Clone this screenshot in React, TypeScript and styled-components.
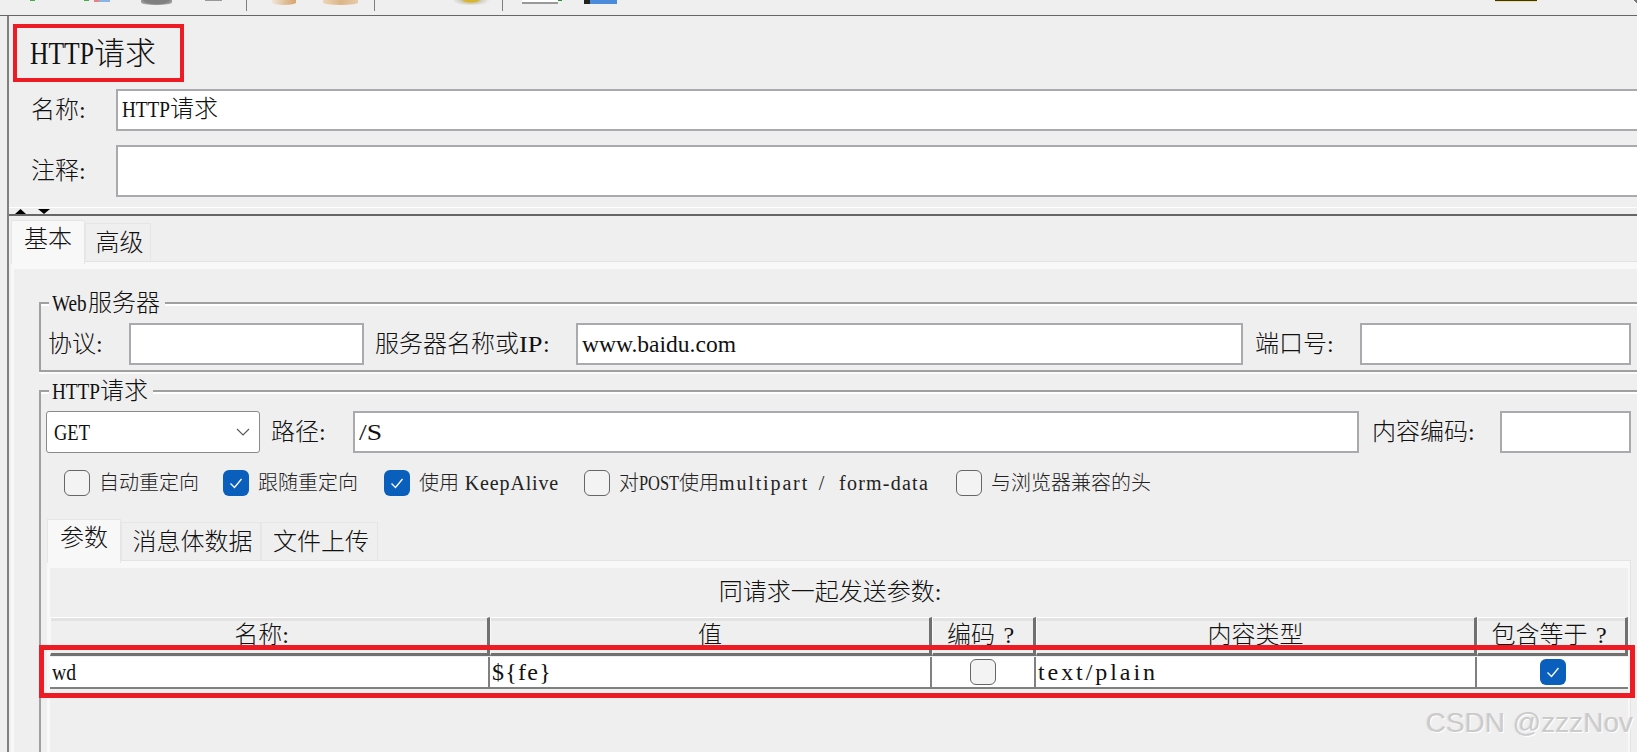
import React from 'react';
import styled, { createGlobalStyle } from 'styled-components';

const GlobalStyle = createGlobalStyle`
  html, body {
    margin: 0;
    padding: 0;
    background: #efefef;
  }
  * {
    box-sizing: border-box;
  }
`;

const Page = styled.div`
  position: relative;
  width: 1637px;
  height: 752px;
  overflow: hidden;
  display: flex;
  flex-direction: column;
  background: #efefef;
  color: #111;
  font-family: 'Liberation Serif', 'Noto Sans CJK SC', serif;
  font-size: 24px;
  font-weight: 300;
`;

/* SimSun style half-width latin: squeezed or tracked into fixed cells */
const Latin = styled.span<{ $cells: number; $scale?: number; $track?: number }>`
  display: inline-block;
  width: ${(p) => p.$cells * 0.5}em;
  white-space: pre;
  font-weight: 400;
  letter-spacing: ${(p) => p.$track ?? 0}em;
  transform: scaleX(${(p) => p.$scale ?? 1});
  transform-origin: left center;
`;

const Toolbar = styled.div`
  flex: none;
  height: 16px;
  display: flex;
  align-items: flex-start;
  border-bottom: 1px solid #666;
`;

const Stub = styled.div<{ $left: number; $w: number; $h: number; $bg: string; $round?: boolean }>`
  flex: none;
  margin-left: ${(p) => p.$left}px;
  width: ${(p) => p.$w}px;
  height: ${(p) => p.$h}px;
  background: ${(p) => p.$bg};
  border-radius: ${(p) => (p.$round ? '0 0 50% 50%' : '0')};
`;

const ToolSeparator = styled.div<{ $left: number }>`
  flex: none;
  margin-left: ${(p) => p.$left}px;
  width: 1px;
  height: 11px;
  background: #808080;
`;

const Content = styled.div`
  flex: 1;
  min-height: 0;
  margin-left: 7px;
  border-left: 2px solid #808080;
  display: flex;
  flex-direction: column;
`;

const TitleBox = styled.div`
  flex: none;
  width: 171px;
  height: 58px;
  margin: 8px 0 0 4px;
  padding-left: 13px;
  border: 4px solid #ed1c24;
  display: flex;
  align-items: center;
  font-size: 31px;
  line-height: 1;
`;

const FormRow = styled.div<{ $top: number; $h: number }>`
  flex: none;
  display: flex;
  margin-top: ${(p) => p.$top}px;
  height: ${(p) => p.$h}px;
  padding-left: 22px;
`;

const RowLabel = styled.label`
  flex: none;
  width: 85px;
  align-self: center;
  line-height: 1;
`;

const WideField = styled.div`
  flex: 1;
  margin-right: -6px;
  padding: 0 0 2px 4px;
  display: flex;
  align-items: center;
  background: #fff;
  border: 2px solid #a9a9ae;
  line-height: 1;
`;

const Splitter = styled.div`
  flex: none;
  height: 9px;
  margin-top: 10px;
  padding-left: 6px;
  display: flex;
  align-items: flex-end;
  gap: 12px;
  border-top: 1px solid #fff;
  border-bottom: 2px solid #666;
`;

const TabBar = styled.div<{ $top: number; $left: number }>`
  flex: none;
  display: flex;
  align-items: flex-end;
  margin-top: ${(p) => p.$top}px;
  margin-left: ${(p) => p.$left}px;
`;

const Tab = styled.div<{ $active?: boolean; $w: number }>`
  position: relative;
  width: ${(p) => p.$w}px;
  height: ${(p) => (p.$active ? 44 : 38)}px;
  margin-bottom: ${(p) => (p.$active ? -3 : 0)}px;
  padding-bottom: ${(p) => (p.$active ? 8 : 0)}px;
  padding-left: ${(p) => (p.$active ? 0 : 3)}px;
  display: flex;
  align-items: center;
  justify-content: center;
  line-height: 1;
  background: ${(p) => (p.$active ? '#f8f8f8' : '#efefef')};
  border: 1px solid #e6e6e6;
  border-bottom: 0;
  z-index: ${(p) => (p.$active ? 1 : 0)};
`;

const OuterPanel = styled.div`
  flex: 1;
  min-height: 0;
  margin-left: 2px;
  padding: 7px 0 0 3px;
  display: flex;
  background: #f8f8f8;
  border-top: 1px solid #e3e3e3;
`;

const OuterBody = styled.div`
  flex: 1;
  min-width: 0;
  padding: 19px 0 0 25px;
  background: #efefef;
`;

const Group = styled.fieldset<{ $top?: number; $tall?: boolean }>`
  display: block;
  margin: ${(p) => p.$top ?? 0}px -10px 0 0;
  padding: 5px 14px 5px 5px;
  min-width: 0;
  min-height: ${(p) => (p.$tall ? 500 : 0)}px;
  border: 2px solid #a0a0a0;
  box-shadow: inset 0 2px 0 #fff, 0 2px 0 #fbfbfb;
`;

const Legend = styled.legend`
  height: 30px;
  margin-left: 3px;
  padding: 0 5px 0 3px;
  background: #efefef;
  line-height: 30px;
`;

const FieldRow = styled.div`
  display: flex;
  align-items: stretch;
  height: 42px;
`;

const FieldLabel = styled.label<{ $w: number; $left: number }>`
  flex: none;
  width: ${(p) => p.$w}px;
  margin-left: ${(p) => p.$left}px;
  align-self: center;
  line-height: 1;
`;

const Field = styled.div<{ $w?: number }>`
  flex: ${(p) => (p.$w ? `none` : `1`)};
  width: ${(p) => (p.$w ? `${p.$w}px` : 'auto')};
  min-width: 0;
  padding-left: 4px;
  display: flex;
  align-items: center;
  background: #fff;
  border: 2px solid #a9a9ae;
  line-height: 1;
`;

const Select = styled.div`
  flex: none;
  width: 214px;
  padding: 0 9px 0 7px;
  display: flex;
  align-items: center;
  justify-content: space-between;
  background: #fff;
  border: 1px solid #8a8a8a;
  border-radius: 3px;
  line-height: 1;
`;

const OptionRow = styled.div`
  display: flex;
  align-items: center;
  height: 26px;
  margin-top: 17px;
  padding-left: 18px;
  font-size: 20px;
  line-height: 1;
  color: #222;
`;

const OptionItem = styled.div<{ $gap: number }>`
  display: flex;
  align-items: center;
  gap: 9px;
  margin-right: ${(p) => p.$gap}px;
`;

const CheckBox = styled.span<{ $checked?: boolean }>`
  flex: none;
  width: 26px;
  height: 26px;
  display: flex;
  align-items: center;
  justify-content: center;
  border-radius: 6px;
  border: ${(p) => (p.$checked ? '0' : '1.5px solid #666')};
  background: ${(p) => (p.$checked ? '#0a5fbc' : '#f3f3f3')};
`;

const InnerPanel = styled.div`
  margin-left: 1px;
  padding: 7px 2px 0 3px;
  background: #f8f8f8;
  border-top: 1px solid #e3e3e3;
  border-right: 1px solid #e3e3e3;
`;

const InnerBody = styled.div`
  background: #efefef;
  min-height: 300px;
`;

const Caption = styled.div`
  height: 49px;
  padding: 5px 18px 0 0;
  line-height: 38px;
  text-align: center;
`;

const TableArea = styled.div`
  position: relative;
`;

const Columns = styled.div`
  display: grid;
  grid-template-columns: 440px 442px 104px 441px 151px;
`;

const HeadCell = styled.div<{ $shift?: number }>`
  height: 39px;
  display: flex;
  align-items: center;
  justify-content: center;
  padding: 0 ${(p) => p.$shift ?? 0}px 2px 0;
  line-height: 1;
  white-space: nowrap;
  border-top: 1px solid #fff;
  border-right: 3px solid #707070;
  border-bottom: 3px solid #707070;
  border-left: 1px solid #f8f8f8;
  box-shadow: inset 0 3px 0 #e3e3e3;
`;

const DataRow = styled(Columns)`
  margin-top: 1px;
  height: 32px;
  background: #fff;
  border-bottom: 2px solid #808080;
`;

const DataCell = styled.div<{ $last?: boolean; $center?: boolean }>`
  min-width: 0;
  padding-left: ${(p) => (p.$center ? 0 : 2)}px;
  display: flex;
  align-items: center;
  justify-content: ${(p) => (p.$center ? 'center' : 'flex-start')};
  line-height: 1;
  border-right: ${(p) => (p.$last ? '0' : '2px solid #808080')};
`;

const RowHighlight = styled.div`
  position: absolute;
  top: 28px;
  left: -11px;
  right: -7px;
  height: 53px;
  border: 5px solid #ed1c24;
  pointer-events: none;
`;

const Watermark = styled.div`
  position: absolute;
  right: 4px;
  bottom: 15px;
  font-family: 'Liberation Sans', sans-serif;
  font-size: 28px;
  font-weight: 400;
  line-height: 1;
  white-space: nowrap;
  color: #cbcbcb;
  text-shadow: 1px 1px 0 #fff, -1px 0 0 #e2e2e2;
`;

const TickIcon = () => (
  <svg width="26" height="26" viewBox="0 0 26 26" fill="none">
    <path d="M7.5 13.5l4 4 7-8.5" stroke="#fff" strokeWidth="1.3" />
  </svg>
);

const ChevronIcon = () => (
  <svg width="14" height="8" viewBox="0 0 14 8" fill="none">
    <path d="M1 1l6 6 6-6" stroke="#555" strokeWidth="1.1" />
  </svg>
);

const Triangle = ({ down, w }: { down?: boolean; w: number }) => (
  <svg width={w} height="5" viewBox="0 0 12 5" preserveAspectRatio="none">
    <path d={down ? 'M0 0h12L6 5z' : 'M6 0l6 5H0z'} fill="#000" />
  </svg>
);

const Question = () => <Latin $cells={2} $track={0.1}> ?</Latin>;

export default function App() {
  return (
    <Page>
      <GlobalStyle />
      <Toolbar>
        <Stub $left={30} $w={5} $h={1} $bg="#3cb043" />
        <Stub $left={49} $w={5} $h={1} $bg="#3cb043" />
        <Stub $left={5} $w={5} $h={2} $bg="#ec7f7f" />
        <Stub $left={0} $w={11} $h={2} $bg="#8ab4e8" />
        <Stub $left={31} $w={31} $h={5} $bg="radial-gradient(ellipse at 50% 0, #808080 55%, #cfcfcf 100%)" $round />
        <Stub $left={33} $w={17} $h={1} $bg="#999" />
        <ToolSeparator $left={24} />
        <Stub $left={25} $w={24} $h={5} $bg="linear-gradient(90deg, #efe6d8, #dcb588 70%, #d9a66b)" $round />
        <Stub $left={27} $w={35} $h={5} $bg="linear-gradient(90deg, #ecd6b8, #dcb588, #e6cba6)" $round />
        <ToolSeparator $left={16} />
        <Stub $left={77} $w={38} $h={5} $bg="radial-gradient(ellipse 19px 6px at 50% 0, #d8b52f 35%, #cfcfc0 55%, #efefef 100%)" $round />
        <ToolSeparator $left={12} />
        <Stub $left={19} $w={36} $h={4} $bg="linear-gradient(#fff 50%, #999 50%)" />
        <Stub $left={0} $w={4} $h={1} $bg="#1d9a3a" />
        <Stub $left={22} $w={6} $h={4} $bg="#222" />
        <Stub $left={0} $w={27} $h={4} $bg="#4a8bdc" />
        <Stub $left={878} $w={42} $h={2} $bg="linear-gradient(#3a3320 50%, #f5e08a 50%)" />
        <Stub $left={95} $w={7} $h={4} $bg="linear-gradient(45deg, #efefef 50%, #777 50%)" />
      </Toolbar>
      <Content>
        <TitleBox>
          <span>
            <Latin $cells={4.13} $scale={0.825}>HTTP</Latin>请求
          </span>
        </TitleBox>
        <FormRow $top={7} $h={42}>
          <RowLabel>名称:</RowLabel>
          <WideField>
            <span>
              <Latin $cells={4} $scale={0.8}>HTTP</Latin>请求
            </span>
          </WideField>
        </FormRow>
        <FormRow $top={14} $h={52}>
          <RowLabel>注释:</RowLabel>
          <WideField />
        </FormRow>
        <Splitter>
          <Triangle w={11} />
          <Triangle w={12} down />
        </Splitter>
        <TabBar $top={4} $left={2}>
          <Tab $active $w={74}>基本</Tab>
          <Tab $w={66}>高级</Tab>
        </TabBar>
        <OuterPanel>
          <OuterBody>
            <Group>
              <Legend>
                <Latin $cells={3} $scale={0.8}>Web</Latin>服务器
              </Legend>
              <FieldRow>
                <FieldLabel $w={81} $left={2}>协议:</FieldLabel>
                <Field $w={235} />
                <FieldLabel $w={201} $left={11}>
                  服务器名称或<Latin $cells={2} $scale={1.1}>IP</Latin>:
                </FieldLabel>
                <Field>
                  <Latin $cells={13} $scale={0.98}>www.baidu.com</Latin>
                </Field>
                <FieldLabel $w={105} $left={12}>端口号:</FieldLabel>
                <Field $w={271} />
              </FieldRow>
            </Group>
            <Group $top={4} $tall>
              <Legend>
                <Latin $cells={4} $scale={0.8}>HTTP</Latin>请求
              </Legend>
              <FieldRow>
                <Select>
                  <Latin $cells={3} $scale={0.77}>GET</Latin>
                  <ChevronIcon />
                </Select>
                <FieldLabel $w={82} $left={11}>路径:</FieldLabel>
                <Field>
                  <Latin $cells={2} $scale={1.15}>/S</Latin>
                </Field>
                <FieldLabel $w={128} $left={13}>内容编码:</FieldLabel>
                <Field $w={131} />
              </FieldRow>
              <OptionRow>
                <OptionItem $gap={24}>
                  <CheckBox />
                  <span>自动重定向</span>
                </OptionItem>
                <OptionItem $gap={26}>
                  <CheckBox $checked><TickIcon /></CheckBox>
                  <span>跟随重定向</span>
                </OptionItem>
                <OptionItem $gap={25}>
                  <CheckBox $checked><TickIcon /></CheckBox>
                  <span>
                    使用<Latin $cells={10} $track={0.042}> KeepAlive</Latin>
                  </span>
                </OptionItem>
                <OptionItem $gap={27}>
                  <CheckBox />
                  <span>
                    对<Latin $cells={4} $scale={0.82}>POST</Latin>使用
                    <Latin $cells={9} $track={0.093}>multipart</Latin>
                    <Latin $cells={3} $track={0.24}> / </Latin>
                    <Latin $cells={9} $track={0.062}>form-data</Latin>
                  </span>
                </OptionItem>
                <OptionItem $gap={0}>
                  <CheckBox />
                  <span>与浏览器兼容的头</span>
                </OptionItem>
              </OptionRow>
              <TabBar $top={23} $left={1}>
                <Tab $active $w={74}>参数</Tab>
                <Tab $w={140}>消息体数据</Tab>
                <Tab $w={117}>文件上传</Tab>
              </TabBar>
              <InnerPanel>
                <InnerBody>
                  <Caption>同请求一起发送参数:</Caption>
                  <TableArea>
                    <Columns>
                      <HeadCell $shift={15}>名称:</HeadCell>
                      <HeadCell>值</HeadCell>
                      <HeadCell>编码<Question /></HeadCell>
                      <HeadCell>内容类型</HeadCell>
                      <HeadCell>包含等于<Question /></HeadCell>
                    </Columns>
                    <DataRow>
                      <DataCell>
                        <Latin $cells={2} $scale={0.82}>wd</Latin>
                      </DataCell>
                      <DataCell>
                        <Latin $cells={5} $track={0.053}>{'${fe}'}</Latin>
                      </DataCell>
                      <DataCell $center>
                        <CheckBox />
                      </DataCell>
                      <DataCell>
                        <Latin $cells={10} $track={0.122}>text/plain</Latin>
                      </DataCell>
                      <DataCell $center $last>
                        <CheckBox $checked><TickIcon /></CheckBox>
                      </DataCell>
                    </DataRow>
                    <RowHighlight />
                  </TableArea>
                </InnerBody>
              </InnerPanel>
            </Group>
          </OuterBody>
        </OuterPanel>
      </Content>
      <Watermark>CSDN @zzzNov</Watermark>
    </Page>
  );
}
